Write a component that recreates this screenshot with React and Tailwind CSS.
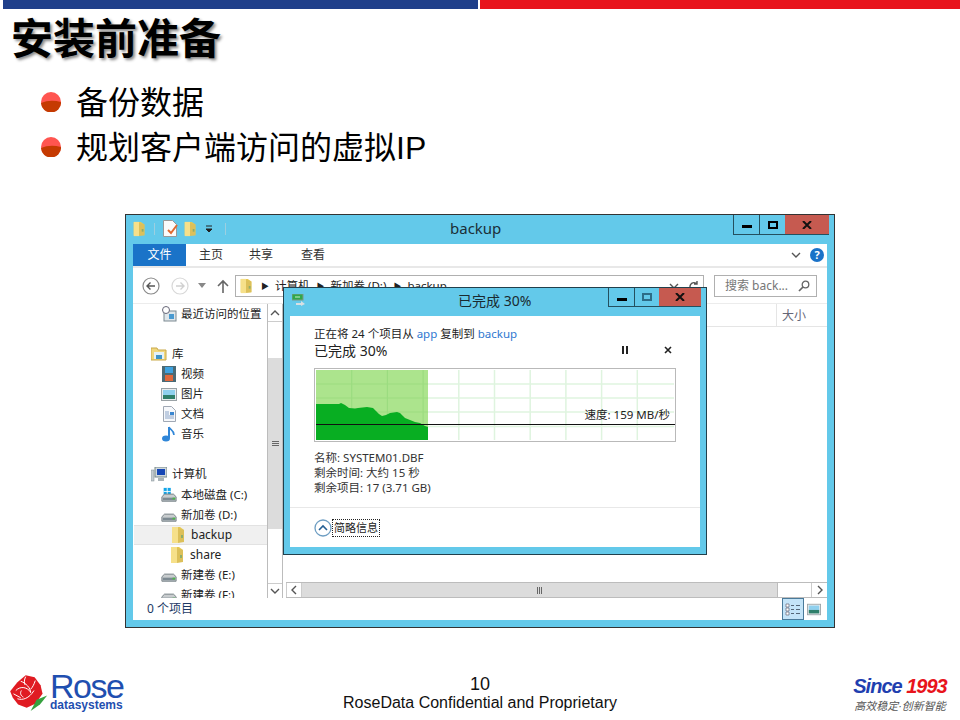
import React from "react";

const uiFont = "font-['Noto_Sans','Noto_Sans_CJK_SC',sans-serif]";

function Folder({ className = "w-[13px] h-[18px]" }) {
  return (
    <svg viewBox="0 0 13 18" className={className}>
      <path d="M0 1h8l4 3v12H0z" fill="#e8c94f" />
      <path d="M0 1h6v16H0z" fill="#f6e08a" />
      <path d="M6 2l6 2v12l-6 1z" fill="#dcc05a" />
      <rect x="9" y="9" width="2" height="3" fill="#8fae6a" />
    </svg>
  );
}

function Disk({ win }) {
  return (
    <svg viewBox="0 0 18 16" className="w-[18px] h-[16px]">
      {win && <rect x="3" y="0" width="8" height="8" fill="#12a5e8" />}
      {win && <path d="M7 0v8M3 4h8" stroke="#fff" strokeWidth="1" />}
      <path d="M1 10l3-3h10l3 3v5H1z" fill="#c8ccce" stroke="#6f7a80" />
      <rect x="2" y="11" width="14" height="3" fill="#7d8a92" />
      <rect x="13" y="11" width="3" height="2" fill="#4cb848" />
    </svg>
  );
}

const icons = {
  recent: (
    <svg viewBox="0 0 16 16" className="w-4 h-4">
      <rect x="3" y="5" width="12" height="10" fill="#dfe6ea" stroke="#7c8a92" />
      <circle cx="5" cy="4" r="3.5" fill="#fff" stroke="#667" />
      <rect x="8" y="8" width="5" height="5" fill="#4a9ad0" />
    </svg>
  ),
  lib: (
    <svg viewBox="0 0 16 14" className="w-4 h-[14px]">
      <path d="M0 1h6l1 2h8v10H0z" fill="#f0d77e" stroke="#c9a94a" />
      <rect x="3" y="5" width="10" height="7" fill="#e4f1f8" />
      <rect x="5" y="8" width="6" height="4" fill="#3f94c8" />
    </svg>
  ),
  video: (
    <svg viewBox="0 0 14 16" className="w-[14px] h-4">
      <rect width="14" height="16" fill="#4a6a76" />
      <rect x="3" y="1" width="8" height="6" fill="#3da2e0" />
      <rect x="3" y="9" width="8" height="6" fill="#e0683c" />
    </svg>
  ),
  pic: (
    <svg viewBox="0 0 16 13" className="w-4 h-[13px]">
      <rect x=".5" y=".5" width="15" height="12" fill="#e8ecee" stroke="#9aa2a6" />
      <rect x="2" y="2" width="12" height="5" fill="#8fd0ee" />
      <rect x="2" y="7" width="12" height="4" fill="#2f7f6a" />
    </svg>
  ),
  doc: (
    <svg viewBox="0 0 13 16" className="w-[13px] h-4">
      <path d="M.5.5h8l4 4v11H.5z" fill="#f6f8fb" stroke="#a0a8b4" />
      <path d="M2 6h4M2 8h4M2 10h9M2 12h9" stroke="#8aa4c8" />
      <rect x="7" y="6" width="4" height="3" fill="#3a86d0" />
    </svg>
  ),
  music: (
    <svg viewBox="0 0 14 16" className="w-[14px] h-4">
      <path d="M7 1c1 3 5 3 5 8" stroke="#2f86d8" strokeWidth="1.6" fill="none" />
      <path d="M7 1v11" stroke="#2f86d8" strokeWidth="2" />
      <ellipse cx="4" cy="12.5" rx="4" ry="3" fill="#2f86d8" />
    </svg>
  ),
  pc: (
    <svg viewBox="0 0 16 15" className="w-4 h-[15px]">
      <rect x="0" y="3" width="3" height="11" fill="#c5ccd0" stroke="#7d8a90" strokeWidth=".5" />
      <rect x="4" y="0" width="12" height="10" fill="#d0d8dc" stroke="#788" />
      <rect x="6" y="2" width="8" height="6" fill="#1747b5" />
      <rect x="7" y="11" width="6" height="3" fill="#aab4b8" />
    </svg>
  ),
  c: <Disk win />,
  d: <Disk />,
  folder: <Folder />,
};

const treeRows = [
  { text: "最近访问的位置", icon: "recent", level: 2 },
  { spacer: "h-5" },
  { text: "库", icon: "lib", level: 1 },
  { text: "视频", icon: "video", level: 2 },
  { text: "图片", icon: "pic", level: 2 },
  { text: "文档", icon: "doc", level: 2 },
  { text: "音乐", icon: "music", level: 2 },
  { spacer: "h-5" },
  { text: "计算机", icon: "pc", level: 1 },
  { spacer: "h-px" },
  { text: "本地磁盘 (C:)", icon: "c", level: 2 },
  { text: "新加卷 (D:)", icon: "d", level: 2 },
  { text: "backup", icon: "folder", level: 3, active: true },
  { text: "share", icon: "folder", level: 3 },
  { text: "新建卷 (E:)", icon: "d", level: 2 },
  { text: "新建卷 (F:)", icon: "d", level: 2 },
];

function TreeRow({ row }) {
  if (row.spacer) return <div className={`${row.spacer} shrink-0`} />;
  const pad = { 1: "pl-[18px] gap-[5px]", 2: "pl-[28px] gap-[4px]", 3: "pl-[36px] gap-[5px]" }[row.level];
  return (
    <div
      className={`flex items-center h-5 shrink-0 text-[11.5px] text-[#222] ${pad} ${
        row.active ? "bg-[#f0f0f0] border-y border-[#e2e2e2] ml-px" : ""
      }`}
    >
      <span className="w-4 flex justify-center shrink-0">{icons[row.icon]}</span>
      <span className={row.level === 3 ? "text-[12px]" : ""}>{row.text}</span>
    </div>
  );
}

function Caption({ small }) {
  const h = small ? "h-[19px]" : "h-5";
  return (
    <div className={`flex ${h} border-l border-b border-[#24505f] text-[#111]`}>
      <div className="w-[26px] flex items-center justify-center border-r border-[#24505f]">
        <div className="w-[10px] h-[3px] bg-black mt-[4px]" />
      </div>
      <div className={`${small ? "w-[24px]" : "w-[25px]"} flex items-center justify-center`}>
        <div className={`w-[10px] h-[8px] border-2 ${small ? "border-[#2d6d88]" : "border-black"}`} />
      </div>
      <div className={`${small ? "w-[42px]" : "w-[44px]"} flex items-center justify-center bg-[#c65a50]`}>
        <svg viewBox="0 0 10 8" className="w-[10px] h-2">
          <path d="M1 0l8 8M9 0L1 8" stroke="#111" strokeWidth="2" />
        </svg>
      </div>
    </div>
  );
}

function SmallArrow({ d }) {
  return (
    <svg viewBox="0 0 10 10" className="w-[10px] h-[10px]">
      <path d={d} stroke="#555" strokeWidth="1.4" fill="none" />
    </svg>
  );
}

function SpeedGraph() {
  const vs = [351.7, 387.4, 423.1, 458.8, 494.5, 530.2, 565.9, 601.6, 637.3];
  const hs = [384, 398, 412, 426.5];
  return (
    <svg viewBox="314 368 362 74" className="w-[362px] h-[74px]">
      <rect x="314.5" y="368.5" width="361" height="73" fill="#fff" stroke="#b9b9b9" />
      {vs.map((x) => (
        <path key={x} d={`M${x} 370V440`} stroke="#dff4df" strokeWidth="1.5" />
      ))}
      {hs.map((y) => (
        <path key={y} d={`M316 ${y}H674`} stroke="#dff4df" strokeWidth="1.5" />
      ))}
      <rect x="316" y="370" width="112" height="70" fill="#ace48d" />
      {vs.slice(0, 3).map((x) => (
        <path key={x} d={`M${x} 370V440`} stroke="#9bdc80" strokeWidth="1.2" />
      ))}
      {hs.map((y) => (
        <path key={y} d={`M316 ${y}H428`} stroke="#9bdc80" strokeWidth="1.2" />
      ))}
      <path
        d="M316 404H339L341 403L345 405L349 408L355 408.5L358 408L367 407L373 408L376 411L379 414L382 416L386 415L390 413L397 412L400 413L403 416L405 418L410 420L415 422L420 423L425 426L428 427V440H316Z"
        fill="#08ae22"
      />
      <path d="M316 424.5H675" stroke="#111" strokeWidth="1" />
    </svg>
  );
}

function CopyDialog() {
  return (
    <div className={`absolute left-[157px] top-[72px] w-[424px] h-[268px] bg-[#63c9ea] border border-[#21404c] flex flex-col ${uiFont}`}>
      <div className="relative flex h-[28px] shrink-0 items-start justify-between pl-[8px] pr-[5px]">
        <svg viewBox="0 0 14 12" className="w-[14px] h-3 mt-[6px]">
          <rect x="0" y="0" width="11" height="6" fill="#2fa84a" stroke="#7d9a88" />
          <path d="M3 3h5" stroke="#c8f0c8" />
          <path d="M4 9h5V7l4 3-4 2V11H4z" fill="#d8dfe2" />
        </svg>
        <span className="absolute left-[174px] top-[2px] text-[14px] text-[#1a2a30]">已完成 30%</span>
        <Caption small />
      </div>
      <div className="mx-[6px] flex-1 bg-white flex flex-col">
        <div className="flex flex-col pl-[24px] pr-[24px] h-[191px]">
          <div className="mt-[9px] h-[18px] text-[11.5px] text-[#222] leading-[18px] whitespace-pre">
            正在将 24 个项目从 <span className="text-[#2f78d0]">app</span> 复制到 <span className="text-[#2f78d0]">backup</span>
          </div>
          <div className="-mt-[2px] flex justify-between items-center h-[18px] pr-[4px]">
            <span className="text-[14px] text-[#222]">已完成 30%</span>
            <div className="flex items-center gap-[36px]">
              <div className="flex gap-[2px]">
                <div className="w-[2px] h-2 bg-[#222]" />
                <div className="w-[2px] h-2 bg-[#222]" />
              </div>
              <svg viewBox="0 0 8 8" className="w-2 h-2">
                <path d="M1 1l6 6M7 1L1 7" stroke="#222" strokeWidth="1.6" />
              </svg>
            </div>
          </div>
          <div className="relative mt-[9px]">
            <SpeedGraph />
            <span className="absolute right-[6px] top-[39px] text-[11.5px] leading-[16px] text-[#222]">速度: 159 MB/秒</span>
          </div>
          <div className="mt-[8px] text-[11.5px] leading-[15px] text-[#333]">
            <div>名称: SYSTEM01.DBF</div>
            <div>剩余时间: 大约 15 秒</div>
            <div>剩余项目: 17 (3.71 GB)</div>
          </div>
        </div>
        <div className="flex-1 border-t border-[#e8e8e8] flex items-center pl-[24px] gap-0">
          <svg viewBox="0 0 18 18" className="w-[18px] h-[18px]">
            <circle cx="9" cy="9" r="8" fill="#fff" stroke="#6d9dc2" strokeWidth="1.3" />
            <path d="M5 11l4-4 4 4" stroke="#245f94" strokeWidth="1.6" fill="none" />
          </svg>
          <span className="border border-dotted border-[#222] px-[1px] text-[11px] leading-[16px] text-[#222]">简略信息</span>
        </div>
      </div>
      <div className="h-[7px] shrink-0" />
    </div>
  );
}

function Explorer() {
  return (
    <div className={`relative ml-[125px] w-[710px] h-[414px] bg-[#63c9ea] border border-[#333] flex flex-col ${uiFont}`}>
      {/* Title bar */}
      <div className="relative flex h-[29px] shrink-0 items-start justify-between pl-[7px] pr-[5px]">
        <div className="flex items-center gap-[6px] h-[26px] pt-[1px]">
          <Folder className="w-[13px] h-[16px]" />
          <div className="w-px h-3 ml-[2px] bg-[#9ccfe0]" />
          <svg viewBox="0 0 15 17" className="w-[15px] h-[17px] ml-[2px]">
            <path d="M.5.5h9l4 4v12H.5z" fill="#fbfbfb" stroke="#999" />
            <path d="M5 10l3 3 6-8" stroke="#e06a30" strokeWidth="2" fill="none" />
          </svg>
          <Folder className="w-[13px] h-[16px]" />
          <svg viewBox="0 0 8 8" className="w-2 h-2 ml-[2px]">
            <path d="M1 1h6M1 4h6l-3 3z" stroke="#222" fill="#222" />
          </svg>
          <div className="w-px h-3 ml-[6px] bg-[#9ccfe0]" />
        </div>
        <span className="absolute left-[324px] top-[2px] text-[15px] text-[#1b2f38]">backup</span>
        <Caption />
      </div>

      <div className="mx-[7px] flex-1 bg-white flex flex-col min-h-0">
        {/* Ribbon tabs */}
        <div className="flex h-[24px] shrink-0 border-b-2 border-[#e8e8e8] items-start text-[12px] text-[#333]">
          <div className="w-[53px] h-[22px] bg-[#1a73c8] text-white flex items-center justify-center">文件</div>
          <div className="ml-[13px] h-[22px] flex items-center">主页</div>
          <div className="ml-[26px] h-[22px] flex items-center">共享</div>
          <div className="ml-[28px] h-[22px] flex items-center">查看</div>
          <div className="ml-auto flex items-center h-[22px] gap-[9px] pr-[3px]">
            <SmallArrow d="M1 3l4 4 4-4" />
            <div className="w-[14px] h-[14px] rounded-full bg-[#1a72c8] text-white font-bold text-[11px] leading-[14px] text-center">?</div>
          </div>
        </div>

        {/* Address row */}
        <div className="flex h-[36px] shrink-0 items-center border-b border-[#ececec]">
          <div className="flex items-center w-[102px] pl-[9px]">
            <svg viewBox="0 0 18 18" className="w-[18px] h-[18px]">
              <circle cx="9" cy="9" r="8" fill="#fff" stroke="#8a8a8a" strokeWidth="1.2" />
              <path d="M13 9H5M8.5 5.5L5 9l3.5 3.5" stroke="#555" strokeWidth="1.4" fill="none" />
            </svg>
            <svg viewBox="0 0 18 18" className="w-[18px] h-[18px] ml-[11px]">
              <circle cx="9" cy="9" r="8" fill="#fff" stroke="#d8d8d8" strokeWidth="1.2" />
              <path d="M5 9h8M9.5 5.5L13 9l-3.5 3.5" stroke="#d0d0d0" strokeWidth="1.4" fill="none" />
            </svg>
            <svg viewBox="0 0 8 5" className="w-2 h-[5px] ml-[9px]">
              <path d="M0 0h8L4 5z" fill="#888" />
            </svg>
            <svg viewBox="0 0 12 14" className="w-3 h-[14px] ml-[11px]">
              <path d="M6 14V2M1 7l5-5 5 5" stroke="#666" strokeWidth="1.6" fill="none" />
            </svg>
          </div>
          <div className="flex items-center h-[22px] w-[469px] border border-[#b0b0b0] text-[11.5px] text-[#222] pl-[4px] pr-[4px]">
            <Folder className="w-[13px] h-[16px]" />
            <span className="ml-[8px] text-[8px] text-[#222]">▶</span>
            <span className="ml-[6px]">计算机</span>
            <span className="ml-[7px] text-[8px]">▶</span>
            <span className="ml-[6px]">新加卷 (D:)</span>
            <span className="ml-[7px] text-[8px]">▶</span>
            <span className="ml-[6px]">backup</span>
            <div className="ml-auto flex gap-[10px] items-center">
              <SmallArrow d="M1 3l4 4 4-4" />
              <SmallArrow d="M8 3a4 4 0 1 0 1 3M8 0v3H5" />
            </div>
          </div>
          <div className="flex items-center justify-between h-[22px] w-[103px] ml-[10px] border border-[#b0b0b0] pl-[10px] pr-[6px] text-[12px] text-[#777]">
            <span>搜索 back...</span>
            <svg viewBox="0 0 12 12" className="w-3 h-3">
              <circle cx="7.5" cy="4.5" r="3.3" fill="none" stroke="#666" strokeWidth="1.3" />
              <path d="M5 7l-4 4" stroke="#666" strokeWidth="1.7" />
            </svg>
          </div>
        </div>

        {/* Body */}
        <div className="flex h-[294px] shrink-0">
          <div className="w-[134px] overflow-hidden flex flex-col">
            {treeRows.map((row, index) => (
              <TreeRow row={row} key={index} />
            ))}
          </div>
          <div className="w-[16px] border-x border-[#bcbcbc] flex flex-col items-center">
            <div className="h-[18px] w-full flex items-center justify-center border-b border-[#ccc]">
              <SmallArrow d="M1 7l4-4 4 4" />
            </div>
            <div className="h-[36px]" />
            <div className="h-[171px] w-full bg-[#dcdcdc] flex flex-col items-center justify-center gap-[1px]">
              <div className="w-[7px] h-px bg-[#666]" />
              <div className="w-[7px] h-px bg-[#666]" />
              <div className="w-[7px] h-px bg-[#666]" />
            </div>
            <div className="flex-1" />
            <div className="h-[15px] w-full flex items-center justify-center border-t border-[#ccc]">
              <SmallArrow d="M1 3l4 4 4-4" />
            </div>
          </div>
          <div className="flex-1 flex flex-col">
            <div className="flex h-[23px] border-b border-[#e5e5e5] justify-end text-[12px] text-[#667]">
              <div className="w-[51px] border-l border-[#e5e5e5] pl-[5px] leading-[23px]">大小</div>
            </div>
            <div className="flex-1" />
            <div className="flex h-[16px] ml-[3px] border-y border-[#bcbcbc] items-stretch">
              <div className="w-[16px] flex items-center justify-center border-x border-[#ccc]">
                <SmallArrow d="M7 1L3 5l4 4" />
              </div>
              <div className="w-[476px] bg-[#dcdcdc] border-r border-[#bcbcbc] flex items-center justify-center gap-[1px]">
                <div className="w-px h-[7px] bg-[#666]" />
                <div className="w-px h-[7px] bg-[#666]" />
                <div className="w-px h-[7px] bg-[#666]" />
              </div>
              <div className="flex-1" />
              <div className="w-[16px] flex items-center justify-center border-l border-[#ccc]">
                <SmallArrow d="M3 1l4 4-4 4" />
              </div>
            </div>
          </div>
        </div>

        {/* Status bar */}
        <div className="flex flex-1 items-center text-[12px] text-[#1d3a66]">
          <span className="ml-[14px]">0 个项目</span>
          <div className="ml-auto flex items-center h-full pr-[6px]">
            <div className="w-[22px] h-full bg-[#c4e4f8] border border-[#4a7a9a] flex items-center justify-center">
              <svg viewBox="0 0 16 13" className="w-4 h-[13px]">
                <path d="M1 1h3v3H1zM1 5h3v3H1zM1 9h3v3H1z" fill="#fff" stroke="#667" strokeWidth=".7" />
                <path d="M6 2.5h3M11 2.5h4M6 6.5h3M11 6.5h4M6 10.5h3M11 10.5h4" stroke="#567" />
              </svg>
            </div>
            <div className="ml-[3px] w-[14px] flex justify-center">{icons.pic}</div>
          </div>
        </div>
      </div>
      <div className="h-[7px] shrink-0" />
      <CopyDialog />
    </div>
  );
}

function Bullet() {
  return (
    <svg viewBox="0 0 20 20" className="w-5 h-5 shrink-0 -mt-[2px]">
      <circle cx="10" cy="10" r="10" fill="#ff5550" />
      <path d="M0 11Q9 7 20 10A10 10 0 0 1 0 11Z" fill="#c53a02" />
    </svg>
  );
}

function RoseLogo() {
  return (
    <svg viewBox="25 40 120 115" className="w-[40px] h-[38px]">
      <path
        d="M28 92L50 65L75 44L102 50L120 74L126 100L104 130L78 142L52 132L36 112Z"
        fill="#e01b22"
      />
      <path
        d="M45 90c15-15 35-10 45 5M60 62c15 5 30 20 30 35M50 115c15 5 35 0 50-25M75 48c-5 10-5 18-2 25M38 100l22 12M62 90c-5 8-2 16 6 20M104 60c-4 12-8 20-14 26"
        stroke="#fff"
        strokeWidth="3"
        fill="none"
      />
      <path d="M90 152L108 118L140 105L118 132Z" fill="#36a13f" />
    </svg>
  );
}

export default function App() {
  return (
    <div className="relative w-[960px] h-[720px] overflow-hidden bg-white flex flex-col font-['Liberation_Sans','Noto_Sans_CJK_SC',sans-serif] text-black">
      <div className="flex h-[9px] shrink-0 pl-[3px]">
        <div className="w-[475px] bg-[#1f3f8a]" />
        <div className="ml-[2px] flex-1 bg-[#e8141c]" />
      </div>
      <h1 className="h-[60px] pl-[11px] pt-px text-[42px] font-bold leading-[60px] [text-shadow:2px_2px_3px_#888]">安装前准备</h1>
      <ul className="mt-[11px] pl-[41px]">
        <li className="flex items-center h-[45px] gap-[15px] text-[32px]">
          <Bullet />
          <span>备份数据</span>
        </li>
        <li className="flex items-center h-[45px] gap-[15px] text-[32px]">
          <Bullet />
          <span>规划客户端访问的虚拟IP</span>
        </li>
      </ul>
      <div className="mt-[44px]">
        <Explorer />
      </div>
      <footer className="mt-[32px] flex-1 flex items-start justify-between px-[9px] relative">
        <div className="flex items-start mt-[14px]">
          <RoseLogo />
          <div className="flex flex-col ml-[1px]">
            <span className="text-[34px] leading-[24px] text-[#1f4fb0] tracking-[-1.5px] h-[24px]">Rose</span>
            <span className="text-[12px] font-bold leading-[12px] text-[#1f4fb0] mt-px">datasystems</span>
          </div>
        </div>
        <div className="absolute left-0 right-0 top-[15px] flex flex-col items-center text-[#111]">
          <span className="text-[18px] leading-[18px]">10</span>
          <span className="text-[16px] leading-[18px] mt-[1px]">RoseData Confidential and Proprietary</span>
        </div>
        <div className="flex flex-col items-center mt-[15px] mr-[3px] w-[96px] italic">
          <div className="text-[20px] leading-[22px] font-bold whitespace-nowrap tracking-[-1px]">
            <span className="text-[#1f3fb0]">Since</span> <span className="text-[#e8141c]">1993</span>
          </div>
          <span className="text-[11px] leading-[12px] mt-[3px] text-[#555] whitespace-nowrap">高效稳定·创新智能</span>
        </div>
      </footer>
    </div>
  );
}
